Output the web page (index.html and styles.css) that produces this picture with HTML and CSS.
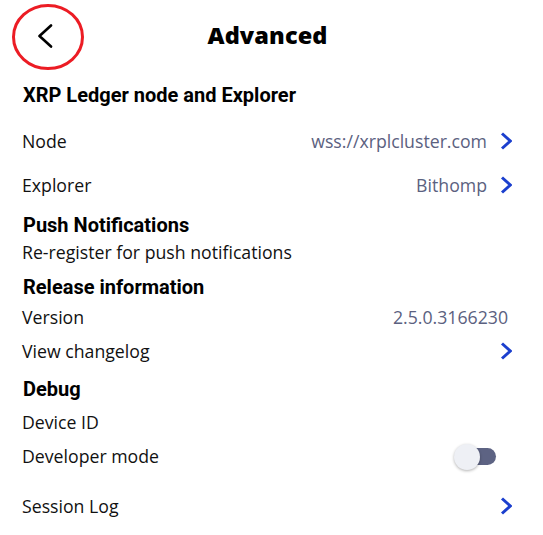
FILE: index.html
```html
<!DOCTYPE html>
<html lang="en">
<head>
<meta charset="utf-8">
<title>Advanced</title>
<link rel="stylesheet" href="styles.css">
</head>
<body>
<div class="screen">
  <header class="header">
    <div class="back">
      <svg class="back-icon" width="16" height="24" viewBox="0 0 16 24"><path d="M14 1.5 L2.5 12 L14 22.5" fill="none" stroke="#000" stroke-width="2.6" stroke-linecap="round" stroke-linejoin="round"/></svg>
    </div>
    <h1 class="title">Advanced</h1>
    <div></div>
    <svg class="mark" width="74" height="68" viewBox="0 0 74 68"><ellipse cx="37" cy="34" rx="34.5" ry="31.5" fill="none" stroke="#ec1c24" stroke-width="3"/></svg>
  </header>

  <section class="section section--ledger">
    <h2 class="section-title">XRP Ledger node and Explorer</h2>
    <div class="rows">
      <div class="row row--tall"><span class="label">Node</span><span class="value">wss://xrplcluster.com</span><svg class="chev" width="12" height="18" viewBox="0 0 12 18"><path d="M2 1.5 L10.3 9 L2 16.5" fill="none" stroke="#1b3fce" stroke-width="3"/></svg></div>
      <div class="row row--tall"><span class="label">Explorer</span><span class="value">Bithomp</span><svg class="chev" width="12" height="18" viewBox="0 0 12 18"><path d="M2 1.5 L10.3 9 L2 16.5" fill="none" stroke="#1b3fce" stroke-width="3"/></svg></div>
    </div>
  </section>

  <section class="section section--push">
    <h2 class="section-title">Push Notifications</h2>
    <div class="rows">
      <div class="row row--short"><span class="label">Re-register for push notifications</span></div>
    </div>
  </section>

  <section class="section section--release">
    <h2 class="section-title">Release information</h2>
    <div class="rows">
      <div class="row"><span class="label">Version</span><span class="value value--plain">2.5.0.3166230</span></div>
      <div class="row"><span class="label">View changelog</span><svg class="chev" width="12" height="18" viewBox="0 0 12 18"><path d="M2 1.5 L10.3 9 L2 16.5" fill="none" stroke="#1b3fce" stroke-width="3"/></svg></div>
    </div>
  </section>

  <section class="section section--debug">
    <h2 class="section-title">Debug</h2>
    <div class="rows">
      <div class="row"><span class="label">Device ID</span></div>
      <div class="row"><span class="label">Developer mode</span><span class="switch"><span class="knob"></span></span></div>
      <div class="row row--gap"><span class="label">Session Log</span><svg class="chev" width="12" height="18" viewBox="0 0 12 18"><path d="M2 1.5 L10.3 9 L2 16.5" fill="none" stroke="#1b3fce" stroke-width="3"/></svg></div>
    </div>
  </section>
</div>
</body>
</html>
```
FILE: styles.css
```css
html, body {
  margin: 0;
  padding: 0;
  background: #ffffff;
}

body {
  font-family: "Open Sans", "Noto Sans", sans-serif;
  color: #111111;
}

.screen {
  width: 543px;
  height: 535px;
  overflow: hidden;
}

.header {
  position: relative;
  height: 69px;
  display: grid;
  grid-template-columns: 1fr auto 1fr;
  align-items: center;
  padding-right: 8px;
}

.back {
  display: flex;
  align-items: center;
  padding-left: 37px;
  padding-top: 2px;
}

.back-icon {
  display: block;
}

.mark {
  position: absolute;
  left: 11px;
  top: 3px;
}

.title {
  margin: 0;
  font-family: "Open Sans", sans-serif;
  font-weight: 800;
  font-size: 23.5px;
  line-height: 30px;
  color: #000000;
  letter-spacing: 0.1px;
}

.section-title {
  margin: 8px 0 0 23px;
  font-family: Roboto, "Liberation Sans", sans-serif;
  font-weight: 700;
  font-size: 20px;
  line-height: 24px;
  color: #000000;
}

.section--ledger .section-title { margin-top: 14px; }
.section--ledger .rows { margin-top: 12px; }
.section--push .section-title { margin-top: 6px; }
.section--release .rows { margin-top: 1px; }
.section--debug .section-title { margin-top: 9px; }
.section--debug .rows { margin-top: 4px; }

.row {
  height: 34px;
  display: flex;
  align-items: center;
  padding: 0 31px 0 22px;
  font-size: 17.7px;
}

.row--tall { height: 44px; }
.row--short { height: 30px; }
.row--gap { margin-top: 16px; }

.label {
  flex: 1;
  white-space: nowrap;
  color: #111111;
}

.value {
  color: #5b6180;
  white-space: nowrap;
  margin-right: 13px;
}

.value--plain {
  margin-right: 4px;
}

.chev {
  display: block;
  flex: none;
}

.switch {
  position: relative;
  width: 40px;
  height: 17px;
  border-radius: 9px;
  background: #5d6383;
  margin-right: 16px;
  flex: none;
}

.knob {
  position: absolute;
  left: -2px;
  top: -4px;
  width: 26px;
  height: 26px;
  border-radius: 50%;
  background: #eef0f5;
  box-shadow: 0 1px 3px rgba(0, 0, 0, 0.3);
}
```
